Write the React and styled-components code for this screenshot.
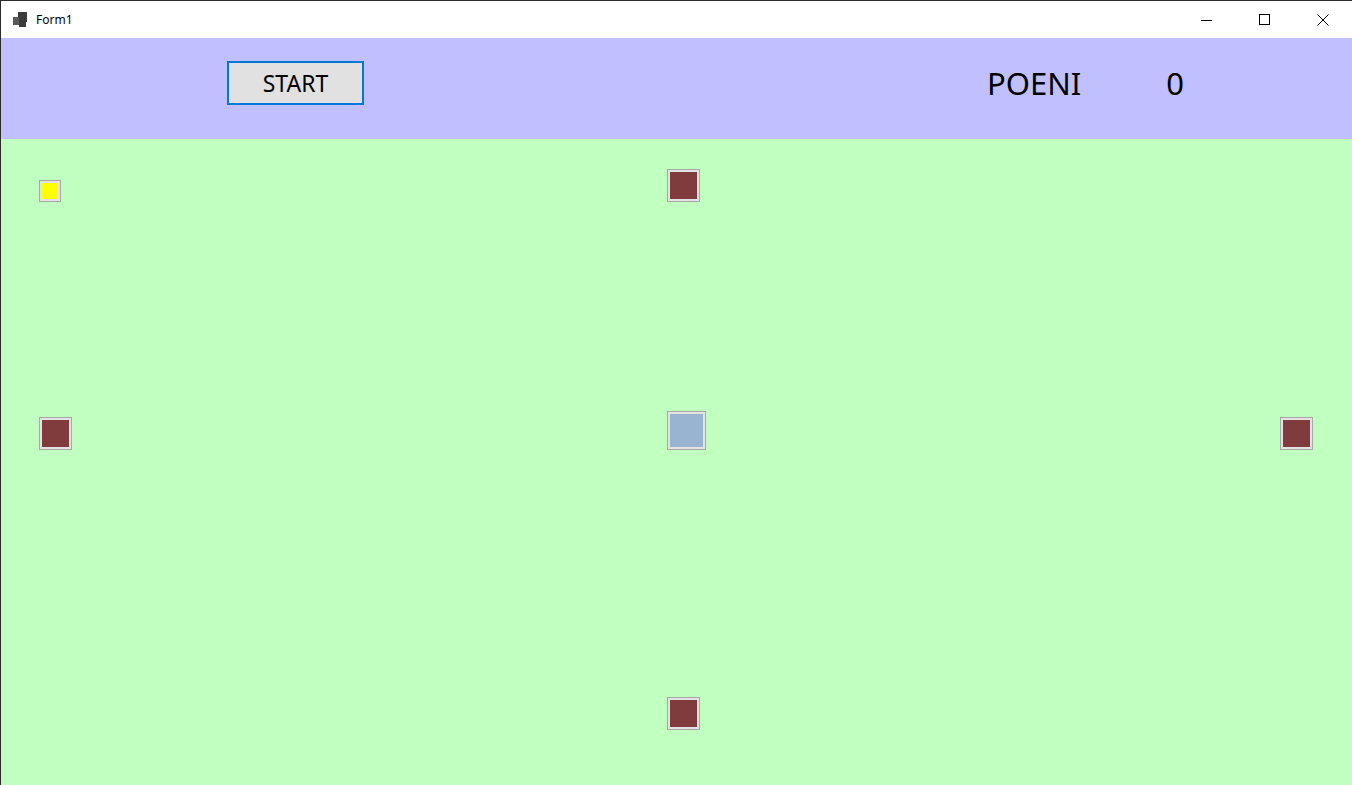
import React from 'react';
import styled, { createGlobalStyle } from 'styled-components';

const GlobalStyle = createGlobalStyle`
  html, body {
    margin: 0;
    padding: 0;
    overflow: hidden;
    background: #c0ffc0;
  }
`;

const Window = styled.div`
  width: 1352px;
  height: 785px;
  display: flex;
  flex-direction: column;
  box-sizing: border-box;
  border-top: 1px solid #2b2b2b;
  border-left: 1px solid #2b2b2b;
  font-family: "Noto Sans", "Open Sans", sans-serif;
  overflow: hidden;
`;

const TitleBar = styled.div`
  height: 37px;
  flex-shrink: 0;
  display: flex;
  align-items: center;
  background: #ffffff;
`;

const AppIcon = styled.svg`
  width: 16px;
  height: 16px;
  margin-left: 11px;
  margin-right: 8px;
`;

const Caption = styled.span`
  font-size: 12px;
  color: #000;
  flex: 1;
  padding-bottom: 1px;
`;

const CaptionButton = styled.div`
  width: 58px;
  height: 37px;
  display: flex;
  align-items: center;
  justify-content: center;
`;

const TopPanel = styled.div`
  height: 101px;
  flex-shrink: 0;
  background: #c0c0ff;
  display: flex;
  align-items: flex-start;
  padding: 23px 0 0 226px;
  box-sizing: border-box;
`;

const StartButton = styled.button`
  width: 137px;
  height: 44px;
  box-sizing: border-box;
  background: #e1e1e1;
  border: 2px solid #0078d7;
  border-radius: 0;
  font-family: "Noto Sans", "Open Sans", sans-serif;
  font-size: 23px;
  color: #000;
  padding: 0 0 1px;
  cursor: pointer;
`;

const ScoreLabel = styled.div`
  font-size: 31px;
  color: #000;
  line-height: 44px;
  margin-left: ${p => p.$gap}px;
`;

const Field = styled.div`
  flex: 1;
  position: relative;
  background: #c0ffc0;
`;

const Piece = styled.div`
  position: absolute;
  box-sizing: border-box;
  border: 1px solid #a8a8a8;
  padding: 2px;
  background: #e3e3e3;

  &::after {
    content: '';
    display: block;
    width: 100%;
    height: 100%;
    background: ${p => p.$color};
  }
`;

const pieces = [
  { x: 38, y: 41, s: 22, color: '#ffff00' },
  { x: 666, y: 30, s: 33, color: '#803c3c' },
  { x: 38, y: 278, s: 33, color: '#803c3c' },
  { x: 666, y: 272, s: 39, color: '#99b4d1' },
  { x: 1279, y: 278, s: 33, color: '#803c3c' },
  { x: 666, y: 558, s: 33, color: '#803c3c' },
];

export default function App() {
  return (
    <>
      <GlobalStyle />
      <Window>
        <TitleBar>
          <AppIcon viewBox="0 0 16 16">
            <rect x="6" y="0" width="9" height="10" fill="#3c3c3c" />
            <rect x="1" y="5" width="6" height="8" fill="#5a5a5a" />
            <rect x="7" y="10" width="7" height="5" fill="#3c3c3c" />
          </AppIcon>
          <Caption>Form1</Caption>
          <CaptionButton>
            <svg width="12" height="12" viewBox="0 0 12 12">
              <line x1="0" y1="6.5" x2="11" y2="6.5" stroke="#000" strokeWidth="1" />
            </svg>
          </CaptionButton>
          <CaptionButton>
            <svg width="12" height="12" viewBox="0 0 12 12">
              <rect x="0.5" y="0.5" width="10" height="10" fill="none" stroke="#000" strokeWidth="1" />
            </svg>
          </CaptionButton>
          <CaptionButton>
            <svg width="12" height="12" viewBox="0 0 12 12">
              <path d="M0.5 0.5 L11.5 11.5 M11.5 0.5 L0.5 11.5" stroke="#000" strokeWidth="1" />
            </svg>
          </CaptionButton>
        </TitleBar>
        <TopPanel>
          <StartButton>START</StartButton>
          <ScoreLabel $gap={623}>POENI</ScoreLabel>
          <ScoreLabel $gap={85}>0</ScoreLabel>
        </TopPanel>
        <Field>
          {pieces.map((p, i) => (
            <Piece
              key={i}
              $color={p.color}
              style={{ left: p.x, top: p.y, width: p.s, height: p.s }}
            />
          ))}
        </Field>
      </Window>
    </>
  );
}
